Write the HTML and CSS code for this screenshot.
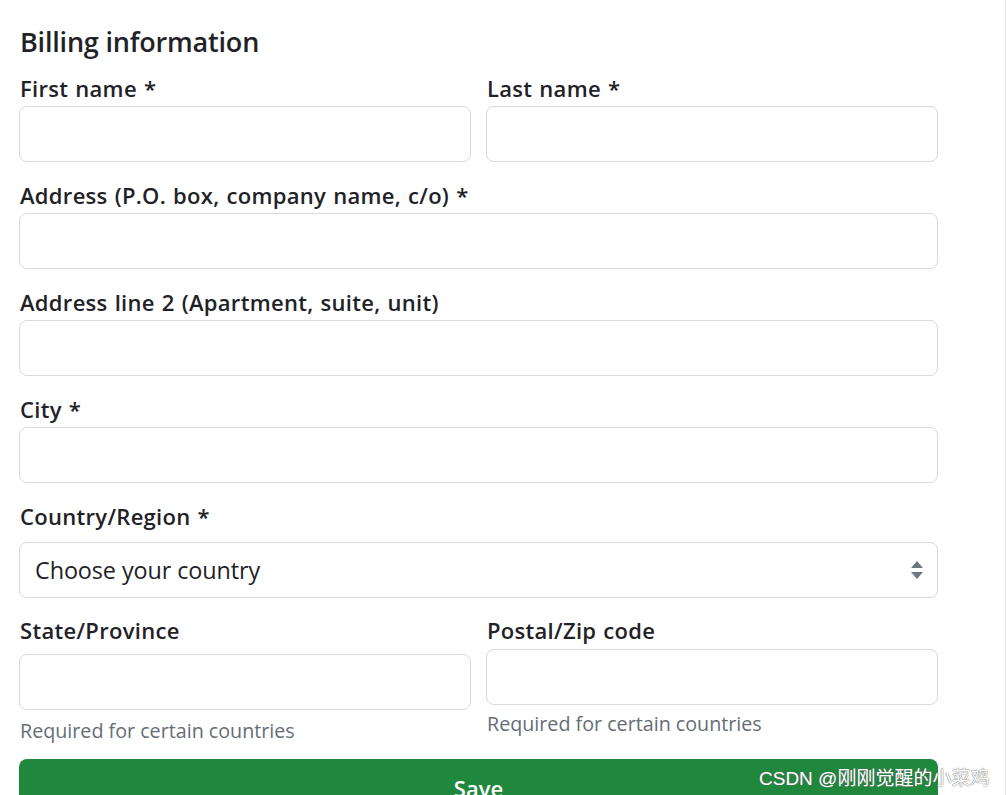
FILE: index.html
```html
<!DOCTYPE html>
<html lang="en">
<head>
<meta charset="utf-8">
<title>Billing information</title>
<link rel="stylesheet" href="styles.css">
</head>
<body>
<div class="page">
  <form class="form">
    <h2 class="title">Billing information</h2>
    <div class="row">
      <div class="group">
        <label class="label">First name *</label>
        <input class="input" type="text">
      </div>
      <div class="group">
        <label class="label">Last name *</label>
        <input class="input" type="text">
      </div>
    </div>
    <div class="group">
      <label class="label">Address (P.O. box, company name, c/o) *</label>
      <input class="input" type="text">
    </div>
    <div class="group">
      <label class="label">Address line 2 (Apartment, suite, unit)</label>
      <input class="input" type="text">
    </div>
    <div class="group">
      <label class="label">City *</label>
      <input class="input" type="text">
    </div>
    <div class="group">
      <label class="label label-select">Country/Region *</label>
      <div class="select">
        <span class="select-text">Choose your country</span>
        <svg class="select-icon" width="14" height="20" viewBox="0 0 14 20"><path d="M7 1 L13 8 H1 Z" fill="#6e7781"/><path d="M1 12 H13 L7 19 Z" fill="#6e7781"/></svg>
      </div>
    </div>
    <div class="row row-last">
      <div class="group">
        <label class="label label-state">State/Province</label>
        <input class="input" type="text">
        <p class="help help-left">Required for certain countries</p>
      </div>
      <div class="group">
        <label class="label label-postal">Postal/Zip code</label>
        <input class="input" type="text">
        <p class="help">Required for certain countries</p>
      </div>
    </div>
    <button class="save" type="button">Save</button>
  </form>
  <div class="watermark">CSDN @刚刚觉醒的小菜鸡</div>
</div>
</body>
</html>
```

FILE: styles.css
```css
html, body {
  margin: 0;
  padding: 0;
  background: #ffffff;
  overflow: hidden;
}

.page {
  position: relative;
  width: 1005px;
  height: 795px;
  border-right: 1px solid #e6e8eb;
  font-family: "Open Sans", "Noto Sans", "Noto Sans CJK SC", sans-serif;
  color: #1f2328;
  overflow: hidden;
}

.form {
  display: flex;
  flex-direction: column;
  gap: 17px;
  width: 919px;
  padding: 24px 0 0 19px;
}

.title {
  margin: 0 0 -5px 1px;
  font-size: 27px;
  font-weight: 600;
  line-height: 36px;
  letter-spacing: -0.2px;
}

.row {
  display: grid;
  grid-template-columns: 452px 452px;
  gap: 15px;
  align-items: start;
}

.group {
  display: flex;
  flex-direction: column;
}

.label {
  font-size: 22px;
  font-weight: 600;
  line-height: 32px;
  margin: 0 0 2px 1px;
  letter-spacing: 0.3px;
  word-spacing: 1px;
}

.label-select {
  margin-bottom: 10px;
}

.row-last {
  margin-top: -1px;
}

.label-state {
  margin-bottom: 8px;
}

.label-postal {
  margin-bottom: 3px;
}

.input {
  box-sizing: border-box;
  height: 56px;
  width: 100%;
  margin: 0;
  border: 1.5px solid #d5dae0;
  border-radius: 8px;
  background: #ffffff;
  font-family: inherit;
  font-size: 22px;
}

.select {
  box-sizing: border-box;
  height: 56px;
  border: 1.5px solid #d5dae0;
  border-radius: 8px;
  display: flex;
  align-items: center;
  justify-content: space-between;
  padding: 0 13px 0 15px;
}

.select-text {
  font-size: 23.4px;
  color: #1f2328;
  letter-spacing: -0.1px;
}

.select-icon {
  display: block;
}

.help {
  margin: 5px 0 0 1px;
  font-size: 19.7px;
  line-height: 28px;
  color: #656d76;
}

.help-left {
  margin-top: 7px;
}

.save {
  box-sizing: border-box;
  margin-top: -3px;
  height: 58px;
  width: 919px;
  border: none;
  border-radius: 8px;
  background: #1f883d;
  color: #ffffff;
  font-family: inherit;
  font-size: 22px;
  font-weight: 600;
  padding: 0;
}

.watermark {
  position: absolute;
  left: 759px;
  top: 763px;
  font-family: "Liberation Sans", "Noto Sans CJK SC", sans-serif;
  font-size: 19px;
  color: #ffffff;
  text-shadow: 0 0 1px #6b6b6b, 0 0 1px #6b6b6b;
  white-space: nowrap;
}
```
